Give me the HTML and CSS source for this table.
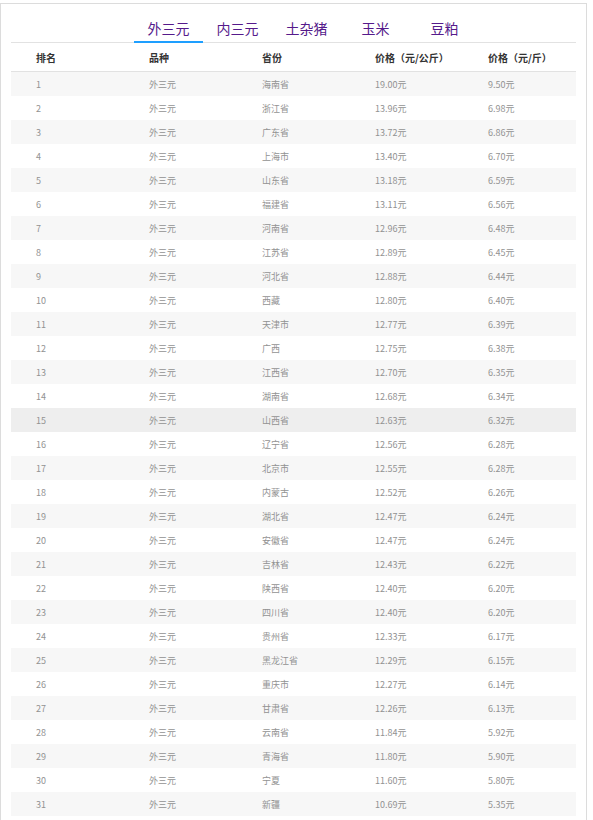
FILE: index.html
```html
<!DOCTYPE html>
<html lang="zh-CN">
<head>
<meta charset="utf-8">
<title>价格</title>
<link rel="stylesheet" href="styles.css">
</head>
<body>
<div class="box">
  <ul class="tabs">
    <li class="tab active"><a href="#">外三元</a></li>
    <li class="tab"><a href="#">内三元</a></li>
    <li class="tab"><a href="#">土杂猪</a></li>
    <li class="tab"><a href="#">玉米</a></li>
    <li class="tab"><a href="#">豆粕</a></li>
  </ul>
  <table class="grid">
    <thead>
      <tr><th>排名</th><th>品种</th><th>省份</th><th>价格（元/公斤）</th><th>价格（元/斤）</th></tr>
    </thead>
    <tbody>
      <tr><td>1</td><td>外三元</td><td>海南省</td><td>19.00元</td><td>9.50元</td></tr>
      <tr><td>2</td><td>外三元</td><td>浙江省</td><td>13.96元</td><td>6.98元</td></tr>
      <tr><td>3</td><td>外三元</td><td>广东省</td><td>13.72元</td><td>6.86元</td></tr>
      <tr><td>4</td><td>外三元</td><td>上海市</td><td>13.40元</td><td>6.70元</td></tr>
      <tr><td>5</td><td>外三元</td><td>山东省</td><td>13.18元</td><td>6.59元</td></tr>
      <tr><td>6</td><td>外三元</td><td>福建省</td><td>13.11元</td><td>6.56元</td></tr>
      <tr><td>7</td><td>外三元</td><td>河南省</td><td>12.96元</td><td>6.48元</td></tr>
      <tr><td>8</td><td>外三元</td><td>江苏省</td><td>12.89元</td><td>6.45元</td></tr>
      <tr><td>9</td><td>外三元</td><td>河北省</td><td>12.88元</td><td>6.44元</td></tr>
      <tr><td>10</td><td>外三元</td><td>西藏</td><td>12.80元</td><td>6.40元</td></tr>
      <tr><td>11</td><td>外三元</td><td>天津市</td><td>12.77元</td><td>6.39元</td></tr>
      <tr><td>12</td><td>外三元</td><td>广西</td><td>12.75元</td><td>6.38元</td></tr>
      <tr><td>13</td><td>外三元</td><td>江西省</td><td>12.70元</td><td>6.35元</td></tr>
      <tr><td>14</td><td>外三元</td><td>湖南省</td><td>12.68元</td><td>6.34元</td></tr>
      <tr class="hover"><td>15</td><td>外三元</td><td>山西省</td><td>12.63元</td><td>6.32元</td></tr>
      <tr><td>16</td><td>外三元</td><td>辽宁省</td><td>12.56元</td><td>6.28元</td></tr>
      <tr><td>17</td><td>外三元</td><td>北京市</td><td>12.55元</td><td>6.28元</td></tr>
      <tr><td>18</td><td>外三元</td><td>内蒙古</td><td>12.52元</td><td>6.26元</td></tr>
      <tr><td>19</td><td>外三元</td><td>湖北省</td><td>12.47元</td><td>6.24元</td></tr>
      <tr><td>20</td><td>外三元</td><td>安徽省</td><td>12.47元</td><td>6.24元</td></tr>
      <tr><td>21</td><td>外三元</td><td>吉林省</td><td>12.43元</td><td>6.22元</td></tr>
      <tr><td>22</td><td>外三元</td><td>陕西省</td><td>12.40元</td><td>6.20元</td></tr>
      <tr><td>23</td><td>外三元</td><td>四川省</td><td>12.40元</td><td>6.20元</td></tr>
      <tr><td>24</td><td>外三元</td><td>贵州省</td><td>12.33元</td><td>6.17元</td></tr>
      <tr><td>25</td><td>外三元</td><td>黑龙江省</td><td>12.29元</td><td>6.15元</td></tr>
      <tr><td>26</td><td>外三元</td><td>重庆市</td><td>12.27元</td><td>6.14元</td></tr>
      <tr><td>27</td><td>外三元</td><td>甘肃省</td><td>12.26元</td><td>6.13元</td></tr>
      <tr><td>28</td><td>外三元</td><td>云南省</td><td>11.84元</td><td>5.92元</td></tr>
      <tr><td>29</td><td>外三元</td><td>青海省</td><td>11.80元</td><td>5.90元</td></tr>
      <tr><td>30</td><td>外三元</td><td>宁夏</td><td>11.60元</td><td>5.80元</td></tr>
      <tr><td>31</td><td>外三元</td><td>新疆</td><td>10.69元</td><td>5.35元</td></tr>
    </tbody>
  </table>
</div>
</body>
</html>
```
FILE: styles.css
```css
html, body {
  margin: 0;
  padding: 0;
  background: #fff;
}
body {
  padding-top: 3px;
  font-family: "Noto Sans CJK SC", "Noto Sans", sans-serif;
}
.box {
  width: 565px;
  min-height: 900px;
  padding: 0 10px;
  border: 1px solid #dcdcdc;
}
.tabs {
  list-style: none;
  margin: 0;
  padding: 0 0 0 123px;
  display: flex;
  height: 38px;
  border-bottom: 1px solid #e2e2e2;
}
.tab {
  position: relative;
  width: 69px;
  text-align: center;
  font-size: 14px;
  line-height: 28px;
  padding-top: 10px;
}
.tab a {
  color: #551a8b;
  text-decoration: none;
}
.tab.active::after {
  content: "";
  position: absolute;
  left: 0;
  right: 0;
  bottom: -1px;
  height: 2px;
  background: #1e9fff;
}
.grid {
  width: 100%;
  table-layout: fixed;
  border-collapse: collapse;
}
.grid th {
  height: 28px;
  padding: 0 0 0 25px;
  text-align: left;
  font-size: 10px;
  font-weight: bold;
  color: #333;
  border-bottom: 1px solid #e2e2e2;
}
.grid td {
  height: 24px;
  padding: 0 0 0 25px;
  font-size: 9px;
  color: #929292;
}
.grid tbody tr:nth-child(odd) {
  background: #f7f7f7;
}
.grid tbody tr.hover {
  background: #eeeeee;
}
```
